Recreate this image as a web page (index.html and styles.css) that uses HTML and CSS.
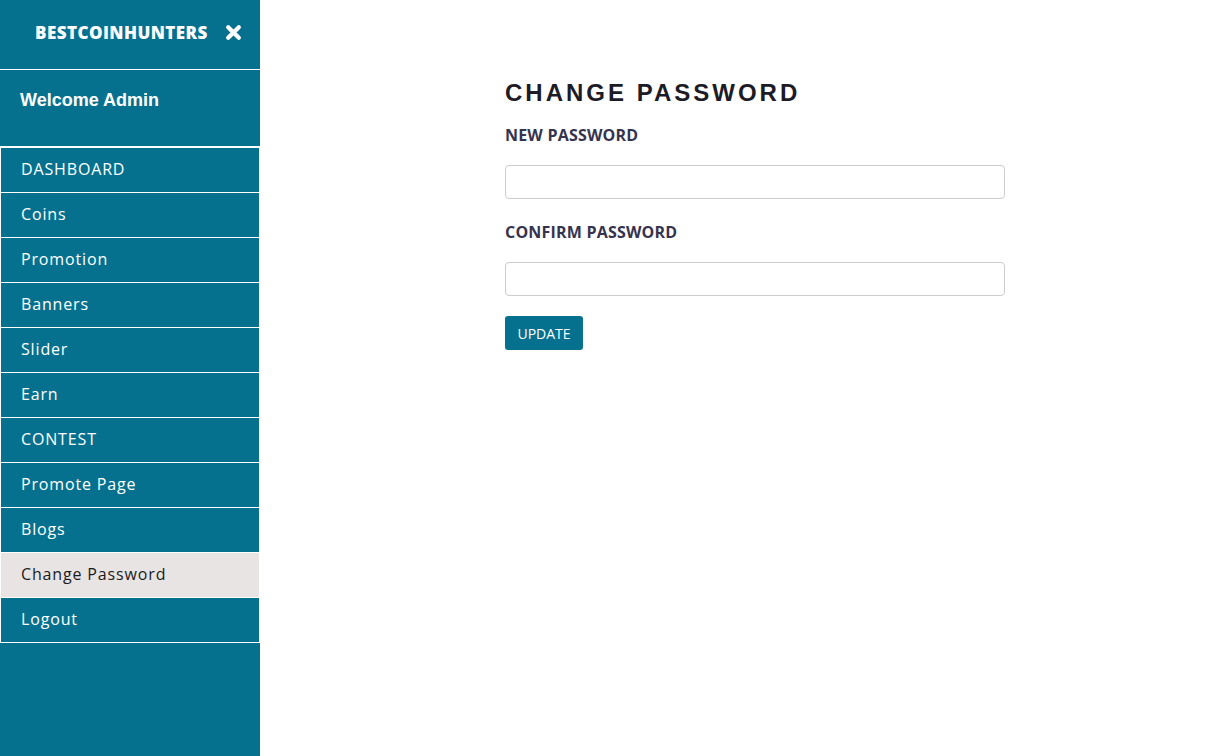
FILE: index.html
```html
<!DOCTYPE html>
<html>
<head>
<meta charset="utf-8">
<title>Change Password</title>
<link rel="stylesheet" href="styles.css">
</head>
<body>
<aside class="sidebar">
  <div class="brand">
    <span class="brand-name">BESTCOINHUNTERS</span>
    <svg class="close" width="17" height="17" viewBox="0 0 16 16"><path d="M3 3 L13 13 M13 3 L3 13" stroke="#fff" stroke-width="4" stroke-linecap="round"/></svg>
  </div>
  <div class="welcome">Welcome Admin</div>
  <ul class="menu">
    <li><a>DASHBOARD</a></li>
    <li><a>Coins</a></li>
    <li><a>Promotion</a></li>
    <li><a>Banners</a></li>
    <li><a>Slider</a></li>
    <li><a>Earn</a></li>
    <li><a>CONTEST</a></li>
    <li><a>Promote Page</a></li>
    <li><a>Blogs</a></li>
    <li class="active"><a>Change Password</a></li>
    <li><a>Logout</a></li>
  </ul>
</aside>
<main class="content">
  <h1 class="title">CHANGE PASSWORD</h1>
  <form class="form">
    <label class="label">NEW PASSWORD</label>
    <input class="input" type="password">
    <label class="label">CONFIRM PASSWORD</label>
    <input class="input" type="password">
    <button class="btn" type="button">UPDATE</button>
  </form>
</main>
</body>
</html>
```
FILE: styles.css
```css
* { box-sizing: border-box; }
html, body { margin: 0; padding: 0; height: 100%; }
body {
  display: flex;
  background: #fff;
  font-family: "Open Sans", "Noto Sans", sans-serif;
}
.sidebar {
  width: 260px;
  flex: 0 0 260px;
  min-height: 100vh;
  background: #06718f;
  color: #fff;
}
.brand {
  height: 70px;
  border-bottom: 1px solid #fff;
  display: flex;
  align-items: center;
  padding: 0 0 4px 35px;
}
.brand-name {
  font-weight: 800;
  font-size: 17px;
  letter-spacing: 0.45px;
  width: 190px;
}
.close { display: block; }
.welcome {
  height: 77px;
  border-bottom: 1px solid #fff;
  padding: 19px 0 0 20px;
  font-family: "Liberation Sans", Arial, sans-serif;
  font-weight: bold;
  font-size: 18px;
  line-height: 22px;
}
.menu {
  list-style: none;
  margin: 0;
  padding: 0;
  border-top: 1px solid #fff;
}
.menu li {
  border: 1px solid #fff;
  border-top: none;
  height: 45px;
}
.menu a {
  display: block;
  line-height: 42px;
  padding-left: 20px;
  font-size: 16px;
  color: #fff;
  letter-spacing: 0.85px;
}
.menu li.active { background: #e9e4e4; }
.menu li.active a { color: #1b1b1b; }
.content {
  flex: 1;
  padding: 79px 0 0 245px;
}
.title {
  margin: 0 0 17px;
  font-family: "Liberation Sans", Arial, sans-serif;
  font-weight: bold;
  font-size: 24px;
  letter-spacing: 3px;
  color: #1c1b26;
  line-height: 28px;
}
.form { display: flex; flex-direction: column; align-items: flex-start; width: 500px; }
.label {
  font-weight: 700;
  font-size: 16px;
  color: #36334f;
  line-height: 22px;
  margin-bottom: 19px;
  letter-spacing: 0.2px;
}
.input {
  width: 500px;
  height: 34px;
  border: 1px solid #cccccc;
  border-radius: 4px;
  margin: 0 0 22px;
  font-size: 14px;
  padding: 6px 12px;
}
.btn {
  margin-top: -2px;
  width: 78px;
  height: 34px;
  background: #06718f;
  color: #fff;
  border: none;
  border-radius: 3px;
  font-family: "Open Sans", "Noto Sans", sans-serif;
  font-size: 14px;
  font-weight: 500;
}
```
